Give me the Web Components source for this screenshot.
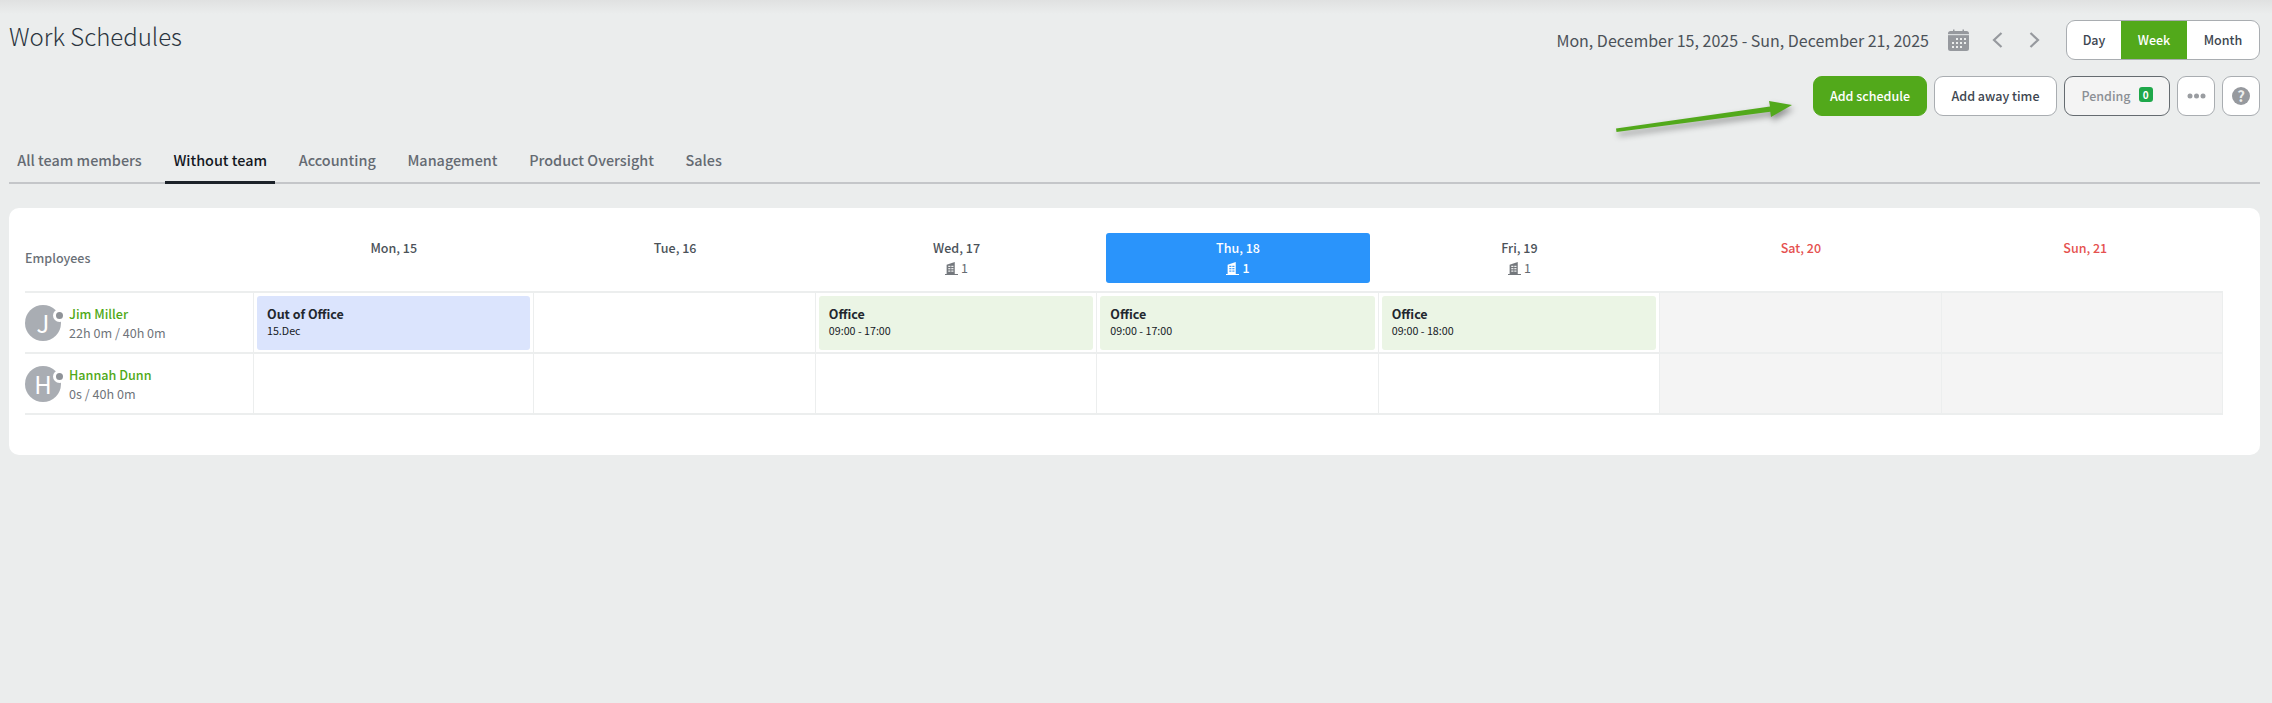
<!DOCTYPE html>
<html><head><meta charset="utf-8">
<style>
html,body{margin:0;padding:0;background:#ebeded;height:100%;overflow:hidden}
body{font-family:"Noto Sans CJK SC","Noto Sans",sans-serif;color:#2f3640}
</style></head><body>
<ws-page>
  <ws-header slot="header">
    <span slot="title">Work Schedules</span>
    <ws-range slot="range">Mon, December 15, 2025 - Sun, December 21, 2025</ws-range>
    <ws-segment slot="range"><span>Day</span><span class="on">Week</span><span>Month</span></ws-segment>
    <ws-btn slot="actions" kind="primary" w="114">Add schedule</ws-btn>
    <ws-btn slot="actions" w="123">Add away time</ws-btn>
    <ws-btn slot="actions" kind="pending" w="106">Pending<ws-badge>0</ws-badge></ws-btn>
    <ws-btn slot="actions" w="38" icon="dots"></ws-btn>
    <ws-btn slot="actions" w="38" icon="help"></ws-btn>
  </ws-header>
  <ws-tabs slot="tabs">
    <ws-tab>All team members</ws-tab><ws-tab active>Without team</ws-tab><ws-tab>Accounting</ws-tab><ws-tab>Management</ws-tab><ws-tab>Product Oversight</ws-tab><ws-tab>Sales</ws-tab>
  </ws-tabs>
  <ws-schedule slot="card">
    <ws-corner>Employees</ws-corner>
    <ws-day>Mon, 15</ws-day><ws-day>Tue, 16</ws-day><ws-day count="1">Wed, 17</ws-day><ws-day count="1" today>Thu, 18</ws-day><ws-day count="1">Fri, 19</ws-day><ws-day weekend>Sat, 20</ws-day><ws-day weekend last>Sun, 21</ws-day>
    <ws-emp initial="J" hours="22h 0m / 40h 0m">Jim Miller</ws-emp>
    <ws-cell first><ws-event kind="away" sub="15.Dec">Out of Office</ws-event></ws-cell>
    <ws-cell></ws-cell>
    <ws-cell><ws-event sub="09:00 - 17:00">Office</ws-event></ws-cell>
    <ws-cell><ws-event sub="09:00 - 17:00">Office</ws-event></ws-cell>
    <ws-cell><ws-event sub="09:00 - 18:00">Office</ws-event></ws-cell>
    <ws-cell weekend></ws-cell><ws-cell weekend></ws-cell>
    <ws-emp initial="H" hours="0s / 40h 0m">Hannah Dunn</ws-emp>
    <ws-cell first></ws-cell><ws-cell></ws-cell><ws-cell></ws-cell><ws-cell></ws-cell><ws-cell></ws-cell><ws-cell weekend></ws-cell><ws-cell weekend></ws-cell>
  </ws-schedule>
</ws-page>
<script>
function def(name, css, html, setup){
  customElements.define(name, class extends HTMLElement{
    constructor(){super();const r=this.attachShadow({mode:'open'});
      r.innerHTML='<style>'+css+'</style>'+(typeof html==='function'?html(this):html);}
    connectedCallback(){ if(setup) setup(this); }
  });
}
const BUILD=c=>`<svg width="13" height="13" viewBox="0 0 12 12" fill="${c}"><path d="M1.500 11V2.500L9 0V11H12V12H0V11Z"/><g fill="var(--w,#fff)"><rect x="3" y="3.500" width="2" height="1"/><rect x="5.800" y="3.500" width="2" height="1"/><rect x="3" y="5.700" width="2" height="1"/><rect x="5.800" y="5.700" width="2" height="1"/><rect x="3" y="7.900" width="2" height="1"/><rect x="5.800" y="7.900" width="2" height="1"/></g></svg>`;

def('ws-page',`:host{display:block;min-height:703px;box-sizing:border-box;padding:0 12px 0 9px;position:relative;
  background:linear-gradient(#e0e1e1,#ebeded 14px)}
  .arrow{position:absolute;left:1610px;top:96px;filter:drop-shadow(2px 4px 3px rgba(0,0,0,.38))}
  .card{margin-top:24px;background:#fff;border-radius:10px;height:247px;box-sizing:border-box;padding:0 37px 0 16px}`,
 `<slot name="header"></slot><slot name="tabs"></slot>
  <svg class="arrow" width="190" height="40" viewBox="0 0 190 40"><path d="M6 32.400L160 10.500L159 5L182 9L161 21L160.300 15.800L6.500 36Z" fill="#52a91b"/></svg>
  <div class="card"><slot name="card"></slot></div>`);

def('ws-header',`:host{display:flex;justify-content:space-between;padding-top:20px}
  .t{font-size:24px;font-weight:300;color:#2b3540;line-height:32px}
  .r{display:flex;flex-direction:column;align-items:flex-end;gap:16px}
  .row{display:flex;align-items:center;height:40px}
  .a{gap:7px}`,
 `<div class="t"><slot name="title"></slot></div>
  <div class="r"><div class="row"><slot name="range"></slot></div><div class="row a"><slot name="actions"></slot></div></div>`);

def('ws-range',`:host{display:flex;align-items:center;font-size:16px;color:#4b5259;margin-right:26px;line-height:24px}
  .cal{margin-left:19px;margin-right:23px;display:block}
  .c{display:block}
  .g{margin-left:26px}`,
 `<slot></slot>
  <svg class="cal" width="21" height="22" viewBox="0 0 21 22"><path d="M2.500 2H5V0.500H6.500V2H14.500V0.500H16V2H18.500A2.500 2.500 0 0 1 21 4.500V19.500A2.500 2.500 0 0 1 18.500 22H2.500A2.500 2.500 0 0 1 0 19.500V4.500A2.500 2.500 0 0 1 2.500 2Z" fill="#96999e"/><rect x="0" y="5" width="21" height="1.200" fill="#ebeded" opacity=".8"/><g fill="#ebeded"><rect x="8" y="9" width="2" height="2"/><rect x="12" y="9" width="2" height="2"/><rect x="16" y="9" width="2" height="2"/><rect x="4" y="13" width="2" height="2"/><rect x="8" y="13" width="2" height="2"/><rect x="12" y="13" width="2" height="2"/><rect x="16" y="13" width="2" height="2"/><rect x="4" y="17" width="2" height="2"/><rect x="8" y="17" width="2" height="2"/><rect x="12" y="17" width="2" height="2"/></g></svg>
  <svg class="c" width="11" height="16" viewBox="0 0 11 16" fill="none" stroke="#96999e" stroke-width="2.200"><path d="M9.500 1L2 8L9.500 15"/></svg>
  <svg class="c g" width="11" height="16" viewBox="0 0 11 16" fill="none" stroke="#96999e" stroke-width="2.200"><path d="M1.500 1L9 8L1.500 15"/></svg>`);

def('ws-segment',`:host{display:inline-flex;height:40px;box-sizing:border-box;border:1px solid #a9adb1;border-radius:9px;background:#fff;overflow:hidden}
  ::slotted(span){display:flex;align-items:center;justify-content:center;font-size:12.500px;font-weight:500;color:#3d4650;box-sizing:border-box;height:100%;line-height:20px}
  ::slotted(span:nth-child(1)){width:54px}
  ::slotted(span:nth-child(2)){width:66px;background:#52a91b;color:#fff}
  ::slotted(span:nth-child(3)){width:72px}`,`<slot></slot>`);

def('ws-btn',`:host{display:inline-flex;align-items:center;justify-content:center;box-sizing:border-box;height:40px;border:1px solid #a9adb1;border-radius:9px;background:#fff;font-size:12.500px;font-weight:500;color:#3d4650;gap:8px;white-space:nowrap;line-height:20px}
  :host([kind=primary]){background:#52a91b;border-color:#52a91b;color:#fff}
  :host([kind=pending]){background:#f4f4f4;border-color:#656b70;color:#8b8f94;}
  svg{display:block}`,
 h=>{const i=h.getAttribute('icon');
   if(i==='dots')return `<svg width="19" height="6" viewBox="0 0 19 6" fill="#9a9da1"><circle cx="3" cy="3" r="2.500"/><circle cx="9.500" cy="3" r="2.500"/><circle cx="16" cy="3" r="2.500"/></svg>`;
   if(i==='help')return `<span style="position:relative;width:18px;height:18px;border-radius:50%;background:#96999e;color:#ebeded;font-size:15px;line-height:18px;text-align:center;display:block;font-weight:700">?</span>`;
   return '<slot></slot>';},
 h=>{h.style.width=h.getAttribute('w')+'px'});

def('ws-badge',`:host{display:inline-flex;align-items:center;justify-content:center;width:14px;height:15px;border-radius:3px;background:#1fa84a;color:#fff;font-size:10px;font-weight:700;margin-top:-4px;line-height:15px}`,`<slot></slot>`);

def('ws-tabs',`:host{display:flex;height:44px;margin-top:22px;border-bottom:2px solid #c4c6c9;gap:15px;box-sizing:content-box}`,`<slot></slot>`);
def('ws-tab',`:host{display:flex;align-items:center;padding:0 8.350px;margin-bottom:-2px;border-bottom:3px solid transparent;font-size:14.400px;font-weight:500;color:#646a72;height:43px;line-height:20px}
  :host([active]){color:#14181f;border-bottom-color:#1c2229}`,`<slot></slot>`);

def('ws-schedule',`:host{display:grid;grid-template-columns:228px repeat(7,1fr);grid-template-rows:85px 61px 61px;}`,`<slot></slot>`);
def('ws-corner',`:host{display:flex;align-items:center;font-size:12.500px;font-weight:500;color:#6a7077;border-bottom:2px solid #eceeee;padding-top:17px;box-sizing:border-box;height:85px;line-height:18px}`,`<slot></slot>`);
def('ws-day',`:host{display:block;box-sizing:border-box;padding:25px 9px 9px 9px;border-bottom:2px solid #eceeee;}
  :host([last]){padding-left:15px}
  .b{height:50px;border-radius:3px;display:flex;flex-direction:column;align-items:center;text-align:center;font-size:12.500px;font-weight:500;color:#4b5259;box-sizing:border-box;padding-top:6px;line-height:18px}
  :host([weekend]) .b{color:#e5514f}
  :host([today]) .b{background:#2a94fb;color:#fff;--w:#2a94fb}
  .n{display:flex;align-items:center;gap:3px;margin-top:2px;font-weight:400;color:#666c72;--w:#fff}
  :host([today]) .n{color:#fff;font-weight:500;--w:#2a94fb}`,
 h=>{const c=h.getAttribute('count');const col=h.hasAttribute('today')?'#fff':'#74787d';
   return `<div class="b"><slot></slot>${c?`<div class="n">${BUILD(col)}<span>${c}</span></div>`:''}</div>`});
def('ws-emp',`:host{display:flex;align-items:center;gap:8px;border-bottom:2px solid #eceeee;box-sizing:border-box;padding-top:1px}
  .a{position:relative;width:36px;height:36px;border-radius:50%;background:#a9adb3;color:#fff;font-size:24px;line-height:36px;text-align:center}
  .d{position:absolute;left:27.500px;top:3.500px;width:7px;height:7px;border-radius:50%;background:#8f9398;border:3px solid #fff;box-sizing:content-box}
  .n{font-size:12.600px;font-weight:500;color:#4fa918;line-height:19px}
  .h{font-size:12.600px;color:#6f747a;line-height:19px}`,
 h=>`<div class="a">${h.getAttribute('initial')}<span class="d"></span></div><div><div class="n"><slot></slot></div><div class="h">${h.getAttribute('hours')}</div></div>`);
def('ws-cell',`:host{display:block;box-sizing:border-box;border-right:1px solid #eceeee;border-bottom:2px solid #eceeee;padding:3px 3px 2px 3px}
  :host([first]){border-left:1px solid #eceeee;}
  :host([weekend]){background:#f4f4f4}`,`<slot></slot>`);
def('ws-event',`:host{display:block;box-sizing:border-box;height:54px;border-radius:3px;background:#ebf5e5;padding:9px 10px 0;color:#22272e;font-size:12.500px;font-weight:700;line-height:18px}
  :host([kind=away]){background:#dbe4fd}
  .s{font-size:10.700px;font-weight:400;color:#14181f;line-height:15px}`,
 h=>`<slot></slot><div class="s">${h.getAttribute('sub')}</div>`);
</script>
</body></html>
